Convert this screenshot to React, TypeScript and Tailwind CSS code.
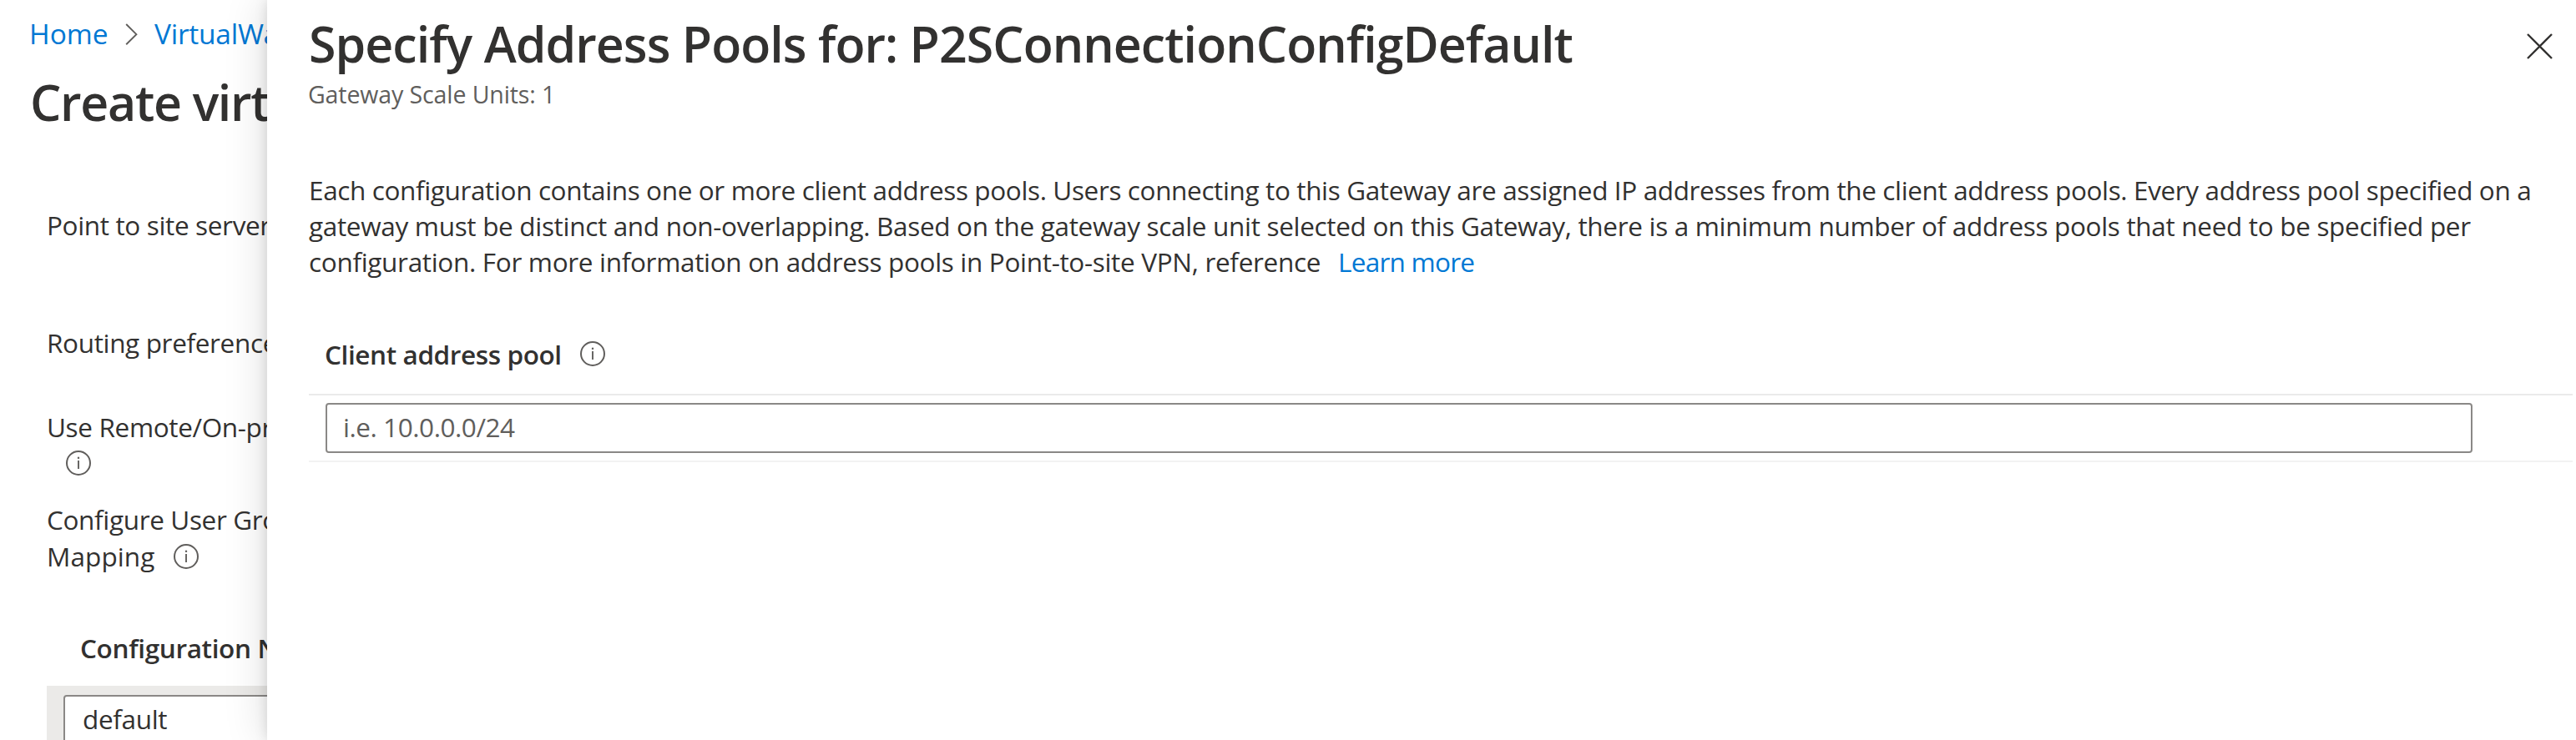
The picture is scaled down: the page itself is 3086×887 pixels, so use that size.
function InfoIcon({ className = "" }: { className?: string }) {
  return (
    <svg viewBox="0 0 30 30" className={`size-[30px] shrink-0 ${className}`} fill="none" stroke="#605e5c">
      <circle cx="15" cy="15" r="14" strokeWidth="2" />
      <path d="M15 12v10" strokeWidth="1.9" />
      <path d="M15 7.7v2.2" strokeWidth="2.2" />
    </svg>
  );
}

function BackgroundForm() {
  return (
    <div className="w-[320px] shrink-0 overflow-hidden whitespace-nowrap text-[31.5px] leading-[44px] tracking-[-0.35px]">
      <nav className="mt-[18px] flex items-center pl-[35px] text-[33.5px] leading-[44px] tracking-[0px] text-[#0078d4]">
        <a className="w-[115px] shrink-0">Home</a>
        <svg viewBox="0 0 15 26" className="mt-[2px] mr-[20px] h-[26px] w-[15px] shrink-0" fill="none" stroke="#605e5c" strokeWidth="1.9">
          <path d="M1.2 1 13.4 13.2 1.2 25.2" />
        </svg>
        <a className="tracking-[-0.25px]">VirtualWan</a>
      </nav>
      <h1 className="mt-[20px] pl-[36px] text-[59px] leading-[80px] font-semibold tracking-[-1.3px]">Create virtual</h1>
      <div className="mt-[86px] pl-[56px]">Point to site server</div>
      <div className="mt-[97px] pl-[56px]">Routing preference</div>
      <div className="mt-[57px] pl-[56px]">Use Remote/On-prem</div>
      <InfoIcon className="mt-[6px] ml-[79px] block" />
      <div className="mt-[31px] pl-[56px]">Configure User Groups</div>
      <div className="flex items-center pl-[56px] tracking-[0.1px]">
        <span className="w-[152px]">Mapping</span>
        <InfoIcon />
      </div>
      <div className="mt-[66px] pl-[96px] font-semibold">Configuration Name</div>
      <div className="mt-[23px] ml-[56px] bg-[#ebeae8] pt-[11px] pb-[9px] pl-[20px]">
        <div className="h-[60px] w-[400px] rounded-[4px] border-2 border-[#8a8886] bg-white pl-[21px] leading-[54px]">default</div>
      </div>
    </div>
  );
}

function AddressPoolPanel() {
  return (
    <section className="relative z-10 flex-1 bg-white shadow-[0_0_50px_rgba(0,0,0,0.14),0_0_14px_rgba(0,0,0,0.13)]">
      <header className="flex items-start justify-between pt-[12px] pr-[28px] pl-[49px]">
        <div>
          <h2 className="pl-px text-[59px] leading-[80px] font-semibold tracking-[-0.94px] whitespace-nowrap">
            Specify Address Pools for: P2SConnectionConfigDefault
          </h2>
          <p className="mt-px text-[28.5px] leading-[40px] tracking-[-0.1px] text-[#605e5c]">Gateway Scale Units: 1</p>
        </div>
        <svg viewBox="0 0 31 31" className="mt-[28px] size-[31px]" fill="none" stroke="#323130" strokeWidth="2.4">
          <path d="M1 1 30 30M30 1 1 30" />
        </svg>
      </header>
      <p className="mt-[73px] pl-[50px] text-[31.5px] leading-[43px] tracking-[-0.32px] whitespace-nowrap">
        <span className="block tracking-[-0.37px]">
          Each configuration contains one or more client address pools. Users connecting to this Gateway are assigned IP
          addresses from the client address pools. Every address pool specified on a
        </span>
        <span className="block">
          gateway must be distinct and non-overlapping. Based on the gateway scale unit selected on this Gateway, there
          is a minimum number of address pools that need to be specified per
        </span>
        <span className="block">
          configuration. For more information on address pools in Point-to-site VPN, reference
          <a className="ml-[21px] tracking-[-0.75px] text-[#0078d4]">Learn more</a>
        </span>
      </p>
      <div className="mt-[68px] mr-[4px] ml-[50px] text-[31.5px]">
        <div className="flex h-[69px] items-start border-b-2 border-[#eaeaea] pl-[19px] leading-[44px] box-content">
          <span className="w-[306px] font-semibold tracking-[-0.4px]">Client address pool</span>
          <InfoIcon className="mt-[6px]" />
        </div>
        <div className="border-b-2 border-[#f2f2f2] py-[9px] pr-[120px] pl-[20px]">
          <div className="h-[60px] rounded-[4px] border-2 border-[#8a8886] pl-[19px] leading-[54px] tracking-[-0.45px] text-[#605e5c]">
            i.e. 10.0.0.0/24
          </div>
        </div>
      </div>
    </section>
  );
}

export default function App() {
  return (
    <main className="flex h-[887px] w-[3086px] overflow-hidden bg-white font-['Open_Sans','Noto_Sans',sans-serif] text-[#323130]">
      <BackgroundForm />
      <AddressPoolPanel />
    </main>
  );
}
